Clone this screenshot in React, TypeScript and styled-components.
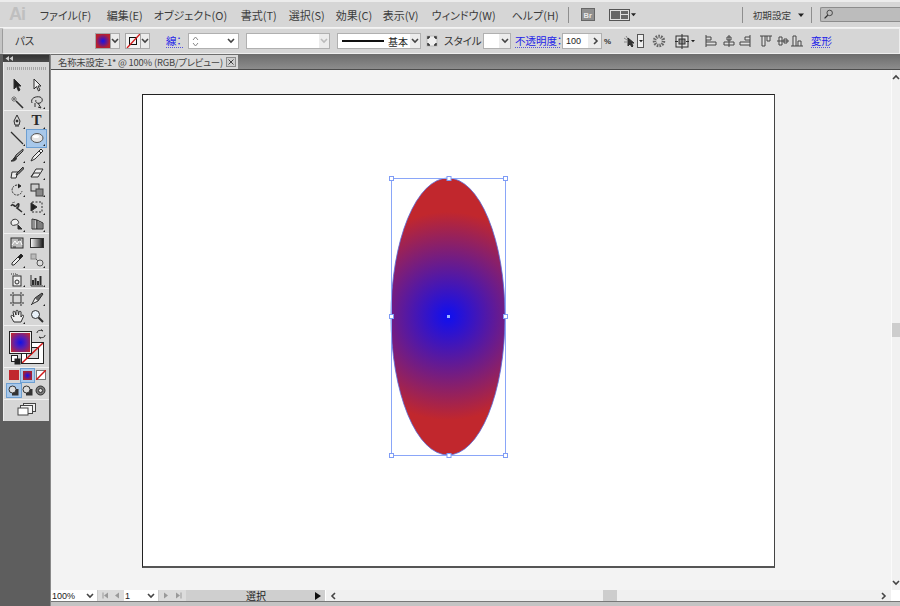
import React from "react";
import styled, { createGlobalStyle } from "styled-components";

const Global = createGlobalStyle`
  html, body { margin: 0; padding: 0; width: 900px; height: 606px; overflow: hidden; background: #c4c4c4; }
  #root { width: 900px; height: 606px; }
  * { box-sizing: border-box; }
`;
const FONT = `"Noto Sans CJK JP", "Liberation Sans", sans-serif`;

const Page = styled.div`
  width: 900px; height: 606px; display: flex; flex-direction: column;
  font-family: ${FONT}; font-feature-settings: "palt"; color: #333; background: #c4c4c4; overflow: hidden;
`;
const MenuBar = styled.div`
  height: 28px; flex: none; display: flex; align-items: center; background: #d6d6d6;
  border-top: 2px solid #ececec; border-bottom: 1px solid #f4f4f4; padding-left: 9px;
`;
const Logo = styled.div`
  width: 31px; font: bold 18px "Liberation Sans", sans-serif; color: #bfbfbf; letter-spacing: -1px;
`;
const MenuItem = styled.span<{ $w: number; $ml: number; $size?: number }>`
  width: ${p => p.$w}px; margin-left: ${p => p.$ml}px; flex: none; font-size: ${p => p.$size ?? 11}px;
  line-height: 14px; white-space: nowrap; color: #3c3c3c;
`;
const VSep = styled.div<{ $ml: number }>`
  width: 1px; height: 16px; background: #8e8e8e; margin-left: ${p => p.$ml}px; flex: none;
`;
const IconSlot = styled.div<{ $ml: number; $w: number }>`
  margin-left: ${p => p.$ml}px; width: ${p => p.$w}px; flex: none; display: flex; align-items: center;
`;
const SearchBox = styled.div`
  width: 81px; height: 15px; margin-left: 8px; background: #bcbcbc; border: 1px solid #8c8c8c;
  border-right: none; border-radius: 2px 0 0 2px; padding-left: 2px; display: flex; align-items: center;
`;

const ControlBar = styled.div`
  height: 26px; flex: none; margin-left: 2px; display: flex; align-items: center; background: #d6d6d6;
  border: 1px solid #eeeeee; border-left: 1px solid #9c9c9c; border-radius: 2px 0 0 2px; padding-left: 12px;
`;
const Label = styled.span<{ $ml: number; $w: number; $link?: boolean }>`
  margin-left: ${p => p.$ml}px; width: ${p => p.$w}px; flex: none; font-size: 10.5px; line-height: 14px; white-space: nowrap;
  color: ${p => (p.$link ? "#2323e8" : "#333")};
  ${p => p.$link && "border-bottom: 1px dotted #5555dd; height: 14px;"}
`;
const Swatch = styled.div<{ $ml: number }>`
  margin-left: ${p => p.$ml}px; width: 16px; height: 16px; flex: none; background: #f3f3f3;
  border: 1px solid #a6a6a6; display: flex; align-items: center; justify-content: center;
`;
const Drop = styled.div<{ $w?: number }>`
  width: ${p => p.$w ?? 9}px; height: 16px; flex: none; background: #ececec; border: 1px solid #adadad;
  border-left: none; display: flex; align-items: center; justify-content: center;
`;
const Field = styled.div<{ $ml: number; $w: number; $dim?: boolean }>`
  margin-left: ${p => p.$ml}px; width: ${p => p.$w}px; height: 16px; flex: none; background: #fff;
  border: 1px solid #b0b0b0; display: flex; align-items: center; font-size: 10px;
  color: ${p => (p.$dim ? "#aaa" : "#222")};
`;
const FieldGrow = styled.div`
  flex: 1; display: flex; align-items: center; padding-left: 3px; min-width: 0; height: 100%;
`;
const StrokeLine = styled.div`
  width: 42px; height: 2px; background: #111; margin: 0 4px 0 1px; flex: none;
`;
const FieldEnd = styled.div<{ $w: number; $bg?: string }>`
  width: ${p => p.$w}px; height: 100%; flex: none; display: flex; align-items: center; justify-content: center;
  background: ${p => p.$bg ?? "transparent"};
`;
const SmallNum = styled.span`
  font: 9px "Liberation Sans", sans-serif; color: #222;
`;
const Percent = styled.span`
  margin-left: 2px; width: 12px; flex: none; font: bold 8px "Liberation Sans", sans-serif; color: #333;
`;
const TargetBtn = styled.span`
  width: 7px; height: 14px; border: 1px solid #555; background: #eee; display: flex; align-items: center;
  justify-content: center; margin-left: 1px; flex: none;
`;
const TriWrap = styled.span`
  margin-left: 1px; flex: none;
`;

const Workspace = styled.div`
  flex: 1; display: flex; min-height: 0;
`;
const Dock = styled.div`
  width: 51px; flex: none; background: #5e5e5e; border-right: 1px solid #888; padding: 1px 1px 0 3px;
`;
const DockHead = styled.div`
  height: 7px; background: linear-gradient(#333, #4a4a4a); display: flex; align-items: center; padding-left: 2px;
`;
const Toolbox = styled.div`
  background: #d6d6d6; border-left: 1px solid #ececec; height: 359px;
`;
const Grip = styled.div`
  height: 15px; padding-top: 5px;
  &::before { content: ""; display: block; margin: 0 3px; height: 3px;
    background: repeating-linear-gradient(90deg, #a4a4a4 0 1px, #d6d6d6 1px 2px); }
`;
const Group = styled.div<{ $pt: number }>`
  padding-top: ${p => p.$pt}px;
  border-bottom: 1px solid #f0f0f0;
`;
const ToolRow = styled.div<{ $h: number }>`
  display: flex; height: ${p => p.$h}px; padding-left: 3px; gap: 1px; align-items: center;
`;
const Tool = styled.div<{ $active?: boolean; $corner?: boolean; $h: number }>`
  width: 19px; height: ${p => p.$h}px; position: relative; display: flex; align-items: center; justify-content: center;
  background: ${p => (p.$active ? "#a8c8ea" : "transparent")};
  outline: ${p => (p.$active ? "1px solid #6d9fd2" : "none")};
  ${p => p.$corner && `&::after { content: ""; position: absolute; right: 1px; bottom: 1px; border: 1.5px solid transparent;
    border-right-color: #222; border-bottom-color: #222; }`}
`;
const TypeGlyph = styled.span`
  font: bold 15px/15px "Liberation Serif", serif; color: #2a2a2a;
`;
const ColorWell = styled.div`
  height: 42px; position: relative; border-bottom: 1px solid #f0f0f0;
`;
const FillBox = styled.div`
  position: absolute; left: 5px; top: 5px; width: 23px; height: 23px; border: 1px solid #222; z-index: 2;
  background: radial-gradient(circle, #1212e6 0, #5a1fb0 38%, #c1272d 85%); outline: 1px solid #eee; outline-offset: -2px;
`;
const StrokeBox = styled.div`
  position: absolute; left: 17px; top: 16px; width: 23px; height: 22px; border: 1px solid #222; background: #fff;
  &::before { content: ""; position: absolute; inset: 4px; border: 1px solid #222; background: #d6d6d6; }
`;
const SlashSvg = styled.svg`
  position: absolute; inset: 0; width: 100%; height: 100%;
`;
const WellIcon = styled.div<{ $l: number; $t: number }>`
  position: absolute; left: ${p => p.$l}px; top: ${p => p.$t}px; width: 10px; height: 10px;
`;
const ModeRow = styled.div<{ $h: number; $line?: boolean }>`
  display: flex; height: ${p => p.$h}px; padding-left: 3px; gap: 0; align-items: center;
  ${p => p.$line && "border-bottom: 1px solid #f0f0f0;"}
`;
const ModeBtn = styled.div<{ $active?: boolean }>`
  width: 13.5px; height: 13px; display: flex; align-items: center; justify-content: center;
  background: ${p => (p.$active ? "#a8c8ea" : "transparent")};
  outline: ${p => (p.$active ? "1px solid #6d9fd2" : "none")};
`;
const ScreenRow = styled.div`
  height: 19px; display: flex; align-items: center; justify-content: center;
`;

const Main = styled.div`
  flex: 1; min-width: 0; display: flex; flex-direction: column;
`;
const TabBar = styled.div`
  height: 16px; flex: none; background: linear-gradient(#6c6c6c, #8c8c8c); border-bottom: 1px solid #4c4c4c;
  padding-top: 1px; display: flex;
`;
const Tab = styled.div`
  width: 187px; height: 14px; background: #d9d9d9; display: flex; align-items: center; padding-left: 7px;
  font-size: 9.4px; letter-spacing: -0.2px; color: #444; white-space: nowrap;
`;
const TabText = styled.span`
  width: 168px; flex: none;
`;
const TabClose = styled.div`
  width: 10px; height: 10px; border: 1px solid #8a8a8a; background: #cfcfcf; display: flex; align-items: center; justify-content: center;
`;
const CanvasRow = styled.div`
  flex: 1; min-height: 0; display: flex;
`;
const Canvas = styled.div`
  flex: 1; min-width: 0; background: #f3f3f3; padding: 24px 0 0 91px;
`;
const Artboard = styled.div`
  width: 633px; height: 474px; background: #fff; border: 1px solid #222; border-right-color: #444;
  border-bottom: 2px solid #555; position: relative;
`;
const Selection = styled.svg`
  position: absolute; left: 243px; top: 78px; width: 124px; height: 288px;
`;
const VScroll = styled.div`
  width: 9px; flex: none; background: #f1f1f1; border-left: 1px solid #fbfbfb; display: flex; flex-direction: column;
  align-items: center; justify-content: space-between; padding: 4px 0 3px;
  position: relative;
`;
const VThumb = styled.div`
  position: absolute; left: 0; top: 253px; width: 8px; height: 14px; background: #cdcdcd;
`;
const BottomBar = styled.div`
  height: 12px; flex: none; display: flex; align-items: center; background: #f0f0f0;
  border-bottom: 1px solid #777;
`;
const Select = styled.div<{ $w: number }>`
  width: ${p => p.$w}px; height: 100%; flex: none; background: #fff; border-right: 1px solid #ccc;
  display: flex; align-items: center; justify-content: space-between; padding: 0 3px 0 1px;
  font: 9px "Liberation Sans", sans-serif; color: #222;
`;
const Nav = styled.div<{ $w: number }>`
  width: ${p => p.$w}px; height: 100%; flex: none; background: #dcdcdc; display: flex; align-items: center;
  justify-content: space-evenly;
`;
const Status = styled.div`
  width: 140px; height: 100%; flex: none; background: #cfcfcf; border-right: 1px solid #fff;
  display: flex; align-items: center; padding-right: 2px; font-size: 10px; color: #222;
`;
const StatusText = styled.span`
  flex: 1; text-align: center; padding-left: 11px; line-height: 11px;
`;
const HTrack = styled.div`
  flex: 1; height: 100%; position: relative; display: flex; align-items: center; justify-content: space-between; padding: 0 4px;
`;
const HThumb = styled.div`
  position: absolute; left: 277px; top: 0; width: 14px; height: 100%; background: #cdcdcd;
`;
const Corner = styled.div`
  width: 9px; height: 100%; flex: none; background: #fff;
`;
const Footer = styled.div`
  height: 4px; flex: none; background: #c4c4c4;
`;
const Glyph = styled.svg`
  display: block; flex: none;
`;
const StatusArrow = styled(Glyph)`
  margin-right: 2px;
`;
const NavGlyph = styled(Glyph)<{ $flip?: boolean }>`
  ${p => p.$flip && "transform: scaleX(-1);"}
`;

/* ---------- drawings ---------- */
const Ic = ({ w = 14, h = 14, vb = "0 0 14 14", children }: { w?: number; h?: number; vb?: string; children: React.ReactNode }) => (
  <Glyph width={w} height={h} viewBox={vb} fill="none" stroke="#2e2e2e" strokeWidth="1">{children}</Glyph>
);
const Chev = ({ d = "down", c = "#444" }: { d?: "down" | "up" | "left" | "right"; c?: string }) => {
  const p = { down: "M1 2 L4 5 L7 2", up: "M1 5 L4 2 L7 5", left: "M5 1 L2 4 L5 7", right: "M3 1 L6 4 L3 7" }[d];
  return <Glyph width="8" height="8" viewBox="0 0 8 8" fill="none" stroke={c} strokeWidth="1.6"><path d={p} /></Glyph>;
};
const TriDown = ({ c = "#333", s = 6 }: { c?: string; s?: number }) => (
  <Glyph width={s} height={s} viewBox="0 0 6 6"><path d="M0 1.5H6L3 5Z" fill={c} /></Glyph>
);

const tools: React.ReactNode[][][] = [
  [
    [<Ic><path d="M4 1 L4 11 L6.5 8.5 L8.5 13 L10 12 L8 8 L11 8Z" fill="#222" /></Ic>,
     <Ic><path d="M4 1 L4 11 L6.5 8.5 L8.5 13 L10 12 L8 8 L11 8Z" fill="#eee" /></Ic>],
    [<Ic><path d="M6 6 L13 13" strokeWidth="1.6" /><path d="M4 1V7M1 4H7M2 2L6 6M6 2L2 6" stroke="#777" /></Ic>,
     <Ic><path d="M2 8 C0 3 6 1 10 2 C13 3 13 7 10 8 C7 9 5 7 6 5 M5 8 L5 12 M8 8 L11 13 L8 12" /></Ic>],
  ],
  [
    [<Ic><path d="M7 1 L10 7 L9 11 H5 L4 7Z M5 12 H9" fill="#ddd" /><circle cx="7" cy="7" r="1" fill="#222" /></Ic>,
     <TypeGlyph>T</TypeGlyph>],
    [<Ic><path d="M1 1 L13 13" strokeWidth="1.2" /></Ic>,
     <Ic><ellipse cx="7" cy="7" rx="6" ry="4.5" fill="#e4e4e4" stroke="#555" /><ellipse cx="6" cy="5.5" rx="3" ry="1.5" fill="#fff" stroke="none" /></Ic>],
    [<Ic><path d="M13 1 L6 7 L5 9 L7 9 L13 3Z" fill="#999" /><path d="M5 9 C3 10 4 12 1 13 C4 13.5 7 12 6.5 9.5" fill="#333" /></Ic>,
     <Ic><path d="M11 1 L13 3 L5 11 L1 13 L3 9Z" fill="#eee" /><path d="M9 3 L11 5" /></Ic>],
    [<Ic><path d="M2 6 H8 L6 12 H1Z" fill="#eee" /><path d="M13 1 L7 7 L6 9 L8 8.5 L13.5 3Z" fill="#777" /></Ic>,
     <Ic><path d="M6 3 H13 L8 11 H1Z" fill="#eee" /><path d="M1 11 L4 7 H10" /></Ic>],
    [<Ic><path d="M10 3 A5 5 0 1 0 12 8" strokeDasharray="2 1" /><path d="M8 1 L11 3 L8 5" fill="#222" /></Ic>,
     <Ic><rect x="1" y="1" width="8" height="7" fill="#ccc" /><rect x="6" y="6" width="7" height="7" fill="#888" stroke="#444" /></Ic>],
    [<Ic><path d="M1 6 C3 2 5 9 7 5 C9 2 10 6 7 8 L12 12" strokeWidth="1.6" /><path d="M2 3 L5 2" stroke="#777" /></Ic>,
     <Ic><rect x="2" y="2" width="10" height="10" strokeDasharray="2 1.5" /><path d="M1 3 L7 7 L1 11Z" fill="#222" /></Ic>],
    [<Ic><path d="M1 6 C1 2 7 1 8 4 C10 6 7 8 5 8 C3 9 1 8 1 6Z" fill="#eee" /><path d="M8 8 L12 12 L8 12Z" fill="#333" /></Ic>,
     <Ic><path d="M2 2 L7 3 V12 H2Z" fill="#ccc" /><path d="M7 3 L13 6 V12 H7Z" fill="#aaa" /><path d="M4 3V12M9 5V12M11 6V12" stroke="#555" /></Ic>],
  ],
  [
    [<Ic><rect x="1" y="2" width="12" height="10" fill="#bbb" /><path d="M2 9 L5 5 L7 8 L10 4 L12 9" stroke="#fff" /><path d="M3 11 H6 M8 4 H11" stroke="#333" /></Ic>,
     <Glyph width="14" height="10"><defs><linearGradient id="g1"><stop offset="0" stopColor="#fff" /><stop offset="1" stopColor="#111" /></linearGradient></defs><rect x=".5" y=".5" width="13" height="9" fill="url(#g1)" stroke="#333" /></Glyph>],
    [<Ic><path d="M11 1 L13 3 L10 6 L8 4Z" fill="#222" /><path d="M8 4 L10 6 L4 12 L2 12 L2 10Z" fill="#eee" /></Ic>,
     <Ic><rect x="1" y="1" width="5" height="5" fill="#bbb" stroke="#888" /><circle cx="10" cy="10" r="3" fill="#ddd" stroke="#555" /><path d="M6 6 L8 8" strokeDasharray="1 1" /></Ic>],
  ],
  [
    [<Ic><rect x="3" y="3" width="8" height="10" fill="#eee" /><circle cx="7" cy="9" r="2" /><path d="M1 1 H7 V3" strokeDasharray="1 1" /></Ic>,
     <Ic><path d="M1 2 V13 H13" /><path d="M3 12 V7 M5.500 12 V5 M8 12 V8 M10.500 12 V3" strokeWidth="2" /></Ic>],
  ],
  [
    [<Ic><rect x="3" y="3" width="8" height="8" /><path d="M3 0 V2 M11 0 V2 M3 12 V14 M11 12 V14 M0 3 H2 M0 11 H2 M12 3 H14 M12 11 H14" /></Ic>,
     <Ic><path d="M12 1 L13 2 L8 9 L5 6Z" fill="#666" /><path d="M5 6 L2 12 L8 9" fill="#eee" /><path d="M2 12 L1 13" /></Ic>],
    [<Ic><path d="M4 13 C2 10 1 8 1 7 C1 6 3 6 4 8 L3 3 C3 2 4.500 2 5 3 L6 6 L6 2 C6 1 8 1 8 2 L8.500 6 L9 3 C9 2 11 2 11 3 L11 8 L12 6.500 C13 5.500 14 6.500 13.500 7.500 L11 13Z" fill="#eee" /></Ic>,
     <Ic><circle cx="5.500" cy="5.500" r="4" fill="#e8f0f8" /><path d="M8.500 8.500 L13 13" strokeWidth="2" /></Ic>],
  ],
];
const corners = [
  [[false, false], [false, true]],
  [[true, true], [true, true], [true, true], [false, true], [true, true], [true, true], [true, true]],
  [[false, false], [true, true]],
  [[true, true]],
  [[false, true], [true, false]],
];
const groupMetrics = [
  { pt: 0, row: 16.5 },
  { pt: 1.4, row: 17.2 },
  { pt: 1, row: 17.2 },
  { pt: 1, row: 17.2 },
  { pt: 1, row: 17.2 },
];

const IconSlotInner = styled.div`
  display: flex; align-items: center; flex: none;
`;
const Align = ({ d }: { d: string }) => (
  <IconSlotInner><Ic w={14} h={14}><path d={d} fill="#e0e0e0" stroke="#444" /></Ic></IconSlotInner>
);

function NavIcon({ left, bar }: { left?: boolean; bar?: boolean }) {
  return (
    <NavGlyph width="7" height="7" $flip={left}>
      <path d="M1 0.500 L5 3.500 L1 6.500Z" fill="#999" />
      {bar && <rect x="5.500" y="0.500" width="1" height="6" fill="#999" />}
    </NavGlyph>
  );
}

function DrawIcon({ x }: { x: number }) {
  return (
    <Glyph width="11" height="11">
      {x === 2 && <circle cx="5.500" cy="5.500" r="4.500" fill="#777" stroke="#333" />}
      {x !== 2 && <rect x="4" y="4" width="6.500" height="6.500" fill="#333" />}
      <circle cx={x === 2 ? 5.5 : 4.5} cy={x === 2 ? 5.5 : 4.5} r={x === 2 ? 2 : 3.500} fill="#ddd" stroke="#333" />
    </Glyph>
  );
}

export default function App() {
  return (
    <Page>
      <Global />
      <MenuBar>
        <Logo>Ai</Logo>
        <MenuItem $ml={0} $w={53}>ファイル(F)</MenuItem>
        <MenuItem $ml={14} $w={33}>編集(E)</MenuItem>
        <MenuItem $ml={14} $w={74}>オブジェクト(O)</MenuItem>
        <MenuItem $ml={13} $w={35}>書式(T)</MenuItem>
        <MenuItem $ml={13} $w={34}>選択(S)</MenuItem>
        <MenuItem $ml={13} $w={34}>効果(C)</MenuItem>
        <MenuItem $ml={13} $w={35}>表示(V)</MenuItem>
        <MenuItem $ml={14} $w={66}>ウィンドウ(W)</MenuItem>
        <MenuItem $ml={14} $w={46}>ヘルプ(H)</MenuItem>
        <VSep $ml={10} />
        <IconSlot $ml={12} $w={14}>
          <Glyph width="14" height="13"><rect x=".5" y=".5" width="13" height="12" fill="#8f8f8f" stroke="#666" /><text x="2.500" y="9.500" fontSize="7.500" fontWeight="bold" fontFamily="Liberation Sans" fill="#e8e8e8">Br</text></Glyph>
        </IconSlot>
        <IconSlot $ml={14} $w={27}>
          <Glyph width="21" height="12"><rect x=".5" y=".5" width="20" height="11" fill="#e0e0e0" stroke="#555" /><rect x="2" y="2" width="9" height="8" fill="#666" /><rect x="12" y="2" width="7" height="3" fill="#666" /><rect x="12" y="6" width="7" height="4" fill="#666" /></Glyph>
          <TriWrap><TriDown c="#222" s={5} /></TriWrap>
        </IconSlot>
        <VSep $ml={106} />
        <MenuItem $ml={10} $w={38} $size={9.6}>初期設定</MenuItem>
        <IconSlot $ml={7} $w={6}><TriDown c="#222" /></IconSlot>
        <VSep $ml={7} />
        <SearchBox>
          <Ic w={11} h={11}><circle cx="8.500" cy="5" r="3.500" /><path d="M6 8 L2 12" strokeWidth="1.600" /></Ic>
        </SearchBox>
      </MenuBar>

      <ControlBar>
        <Label $ml={0} $w={16}>パス</Label>
        <Swatch $ml={64}>
          <Glyph width="14" height="14"><defs><radialGradient id="sw"><stop offset="0" stopColor="#1212ee" /><stop offset="1" stopColor="#b8202e" /></radialGradient></defs><rect width="14" height="14" fill="url(#sw)" /></Glyph>
        </Swatch>
        <Drop><Chev /></Drop>
        <Swatch $ml={5}>
          <Glyph width="14" height="14"><rect x="3.500" y="3.500" width="7" height="7" fill="none" stroke="#111" /><path d="M1 14 L14 0" stroke="#d21818" strokeWidth="1.300" /></Glyph>
        </Swatch>
        <Drop><Chev /></Drop>
        <Label $ml={16} $w={17} $link>線：</Label>
        <Field $ml={5} $w={51}>
          <FieldEnd $w={12}><Glyph width="7" height="11"><path d="M1 4 L3.500 1 L6 4 M1 7 L3.500 10 L6 7" fill="none" stroke="#888" /></Glyph></FieldEnd>
          <FieldGrow />
          <FieldEnd $w={14}><Chev /></FieldEnd>
        </Field>
        <Field $ml={7} $w={84}>
          <FieldGrow />
          <FieldEnd $w={10} $bg="#ececec"><Chev c="#bbb" /></FieldEnd>
        </Field>
        <Field $ml={7} $w={84}>
          <FieldGrow><StrokeLine /><span>基本</span></FieldGrow>
          <FieldEnd $w={10} $bg="#ececec"><Chev /></FieldEnd>
        </Field>
        <IconSlot $ml={5} $w={12}>
          <Ic w={12} h={12} vb="0 0 12 12"><rect x="1" y="1" width="10" height="10" fill="#eee" stroke="#bbb" /><path d="M2 4 V2 H4 M8 2 H10 V4 M10 8 V10 H8 M4 10 H2 V8" strokeWidth="1.500" /></Ic>
        </IconSlot>
        <Label $ml={6} $w={36}>スタイル：</Label>
        <Field $ml={3} $w={28}>
          <FieldGrow />
          <FieldEnd $w={11} $bg="#ececec"><Chev /></FieldEnd>
        </Field>
        <Label $ml={4} $w={45} $link>不透明度：</Label>
        <Field $ml={2} $w={40}>
          <FieldGrow><SmallNum>100</SmallNum></FieldGrow>
          <FieldEnd $w={13} $bg="#ececec"><Chev d="right" /></FieldEnd>
        </Field>
        <Percent>%</Percent>
        <IconSlot $ml={7} $w={21}>
          <Ic w={13} h={13} vb="0 0 13 13"><path d="M1 3 L4 5 M3 1 L5 4 M1 7 H4" stroke="#888" /><path d="M5 3 L5 11 L7 9 L9 12 L10 11 L8.500 8 L11 8Z" fill="#333" /></Ic>
          <TargetBtn><TriDown c="#222" s={4} /></TargetBtn>
        </IconSlot>
        <IconSlot $ml={8} $w={14}>
          <Glyph width="14" height="14"><circle cx="7" cy="7" r="4.500" fill="none" stroke="#666" strokeWidth="3.500" strokeDasharray="1.500 1" /></Glyph>
        </IconSlot>
        <IconSlot $ml={9} $w={20}>
          <Ic w={15} h={15} vb="0 0 15 15"><rect x="1" y="2" width="12" height="11" fill="#e0e0e0" /><rect x="4" y="5" width="6" height="5" fill="#999" /><path d="M7 0 V15 M0 7.500 H3 M11 7.500 H14" /></Ic>
          <TriWrap><TriDown c="#222" s={4} /></TriWrap>
        </IconSlot>
        <IconSlot $ml={9} $w={14}><Align d="M2 1 V13 M2 3 H7 V6 H2 M2 8 H12 V11 H2" /></IconSlot>
        <IconSlot $ml={4} $w={14}><Align d="M7 1 V13 M5 3 H9 V6 H5Z M2 8 H12 V11 H2Z" /></IconSlot>
        <IconSlot $ml={2} $w={14}><Align d="M12 1 V13 M12 3 H7 V6 H12 M12 8 H2 V11 H12" /></IconSlot>
        <IconSlot $ml={7} $w={14}><Align d="M1 2 H13 M3 2 V12 H6 V2 M8 2 V7 H11 V2" /></IconSlot>
        <IconSlot $ml={3} $w={14}><Align d="M1 7 H13 M3 3 H6 V11 H3Z M8 5 H11 V9 H8Z" /></IconSlot>
        <IconSlot $ml={0} $w={14}><Align d="M1 12 H13 M3 12 V2 H6 V12 M8 12 V7 H11 V12" /></IconSlot>
        <Label $ml={7} $w={19} $link>変形</Label>
      </ControlBar>

      <Workspace>
        <Dock>
          <DockHead><Glyph width="8" height="5"><path d="M4 0 V5 L0.500 2.500Z M8 0 V5 L4.500 2.500Z" fill="#ccc" /></Glyph></DockHead>
          <Toolbox>
            <Grip />
            {tools.map((group, gi) => (
              <Group key={gi} $pt={groupMetrics[gi].pt}>
                {group.map((row, ri) => (
                  <ToolRow key={ri} $h={groupMetrics[gi].row}>
                    {row.map((ic, ti) => (
                      <Tool key={ti} $h={groupMetrics[gi].row} $corner={corners[gi][ri][ti]} $active={gi === 1 && ri === 1 && ti === 1}>{ic}</Tool>
                    ))}
                  </ToolRow>
                ))}
              </Group>
            ))}
            <ColorWell>
              <FillBox />
              <StrokeBox><SlashSvg viewBox="0 0 23 22" preserveAspectRatio="none"><path d="M0 22 L23 0" stroke="#d01818" strokeWidth="1.600" /></SlashSvg></StrokeBox>
              <WellIcon $l={32} $t={3}><Glyph width="10" height="10"><path d="M1 4 C1 1 5 1 7 2 M7 2 L5 0.500 M9 6 C9 9 5 9 3 8 M3 8 L5 9.500" fill="none" stroke="#333" /></Glyph></WellIcon>
              <WellIcon $l={7} $t={29}><Glyph width="10" height="10"><rect x="0.500" y="0.500" width="6" height="6" fill="#fff" stroke="#222" /><rect x="3.500" y="3.500" width="6" height="6" fill="#222" /></Glyph></WellIcon>
            </ColorWell>
            <ModeRow $h={15}>
              <ModeBtn><Glyph width="10" height="10"><rect width="10" height="10" fill="#c1272d" /></Glyph></ModeBtn>
              <ModeBtn $active>
                <Glyph width="9" height="9"><defs><radialGradient id="mb"><stop offset="0" stopColor="#1212ee" /><stop offset="1" stopColor="#a8202e" /></radialGradient></defs><rect width="9" height="9" fill="url(#mb)" /></Glyph>
              </ModeBtn>
              <ModeBtn><Glyph width="10" height="10"><rect x=".5" y=".5" width="9" height="9" fill="#fff" stroke="#777" /><path d="M0 10 L10 0" stroke="#d01818" strokeWidth="1.500" /></Glyph></ModeBtn>
            </ModeRow>
            <ModeRow $h={17} $line>
              <ModeBtn $active><DrawIcon x={0} /></ModeBtn>
              <ModeBtn><DrawIcon x={1} /></ModeBtn>
              <ModeBtn><DrawIcon x={2} /></ModeBtn>
            </ModeRow>
            <ScreenRow>
              <Glyph width="20" height="13"><rect x="6.500" y=".5" width="12" height="8" fill="#eee" stroke="#444" /><rect x="3.500" y="2.500" width="12" height="8" fill="#f4f4f4" stroke="#444" /><rect x="1" y="5" width="10" height="7" fill="#fff" stroke="#444" /></Glyph>
            </ScreenRow>
          </Toolbox>
        </Dock>
        <Main>
          <TabBar>
            <Tab>
              <TabText>名称未設定-1* @ 100% (RGB/プレビュー)</TabText>
              <TabClose><Glyph width="6" height="6"><path d="M0.500 0.500 L5.500 5.500 M5.500 0.500 L0.500 5.500" stroke="#444" /></Glyph></TabClose>
            </Tab>
          </TabBar>
          <CanvasRow>
            <Canvas>
              <Artboard>
                <Selection viewBox="386 173 124 288">
                  <defs>
                    <radialGradient id="oval" gradientUnits="userSpaceOnUse" cx="448" cy="316" r="112">
                      <stop offset="0" stopColor="#0f0ff0" />
                      <stop offset="0.93" stopColor="#c1272d" />
                      <stop offset="1" stopColor="#c1272d" />
                    </radialGradient>
                  </defs>
                  <ellipse cx="448" cy="316.500" rx="57" ry="138.500" fill="url(#oval)" stroke="#5a6ad8" strokeWidth="0.800" />
                  <rect x="391.500" y="178.500" width="114" height="277" fill="none" stroke="#8aa6f8" />
                  {[[391, 178], [448.500, 178], [505, 178], [391, 316], [505, 316], [391, 455], [448.500, 455], [505, 455]].map(([x, y]) => (
                    <rect key={`${x}-${y}`} x={x - 1.500} y={y - 1.500} width="4" height="4" fill="#fff" stroke="#7f9cf5" />
                  ))}
                  <rect x="447" y="315" width="3" height="3" fill="#9db8ff" />
                </Selection>
              </Artboard>
            </Canvas>
            <VScroll>
              <Chev d="up" />
              <VThumb />
              <Chev d="down" />
            </VScroll>
          </CanvasRow>
          <BottomBar>
            <Select $w={47}>100%<Chev /></Select>
            <Nav $w={26}><NavIcon bar left /><NavIcon left /></Nav>
            <Select $w={35}>1<Chev /></Select>
            <Nav $w={27}><NavIcon /><NavIcon bar /></Nav>
            <Status>
              <StatusText>選択</StatusText>
              <StatusArrow width="6" height="8"><path d="M0 0 L6 4 L0 8Z" fill="#111" /></StatusArrow>
            </Status>
            <HTrack>
              <Chev d="left" />
              <HThumb />
              <Chev d="right" />
            </HTrack>
            <Corner />
          </BottomBar>
          <Footer />
        </Main>
      </Workspace>
    </Page>
  );
}
